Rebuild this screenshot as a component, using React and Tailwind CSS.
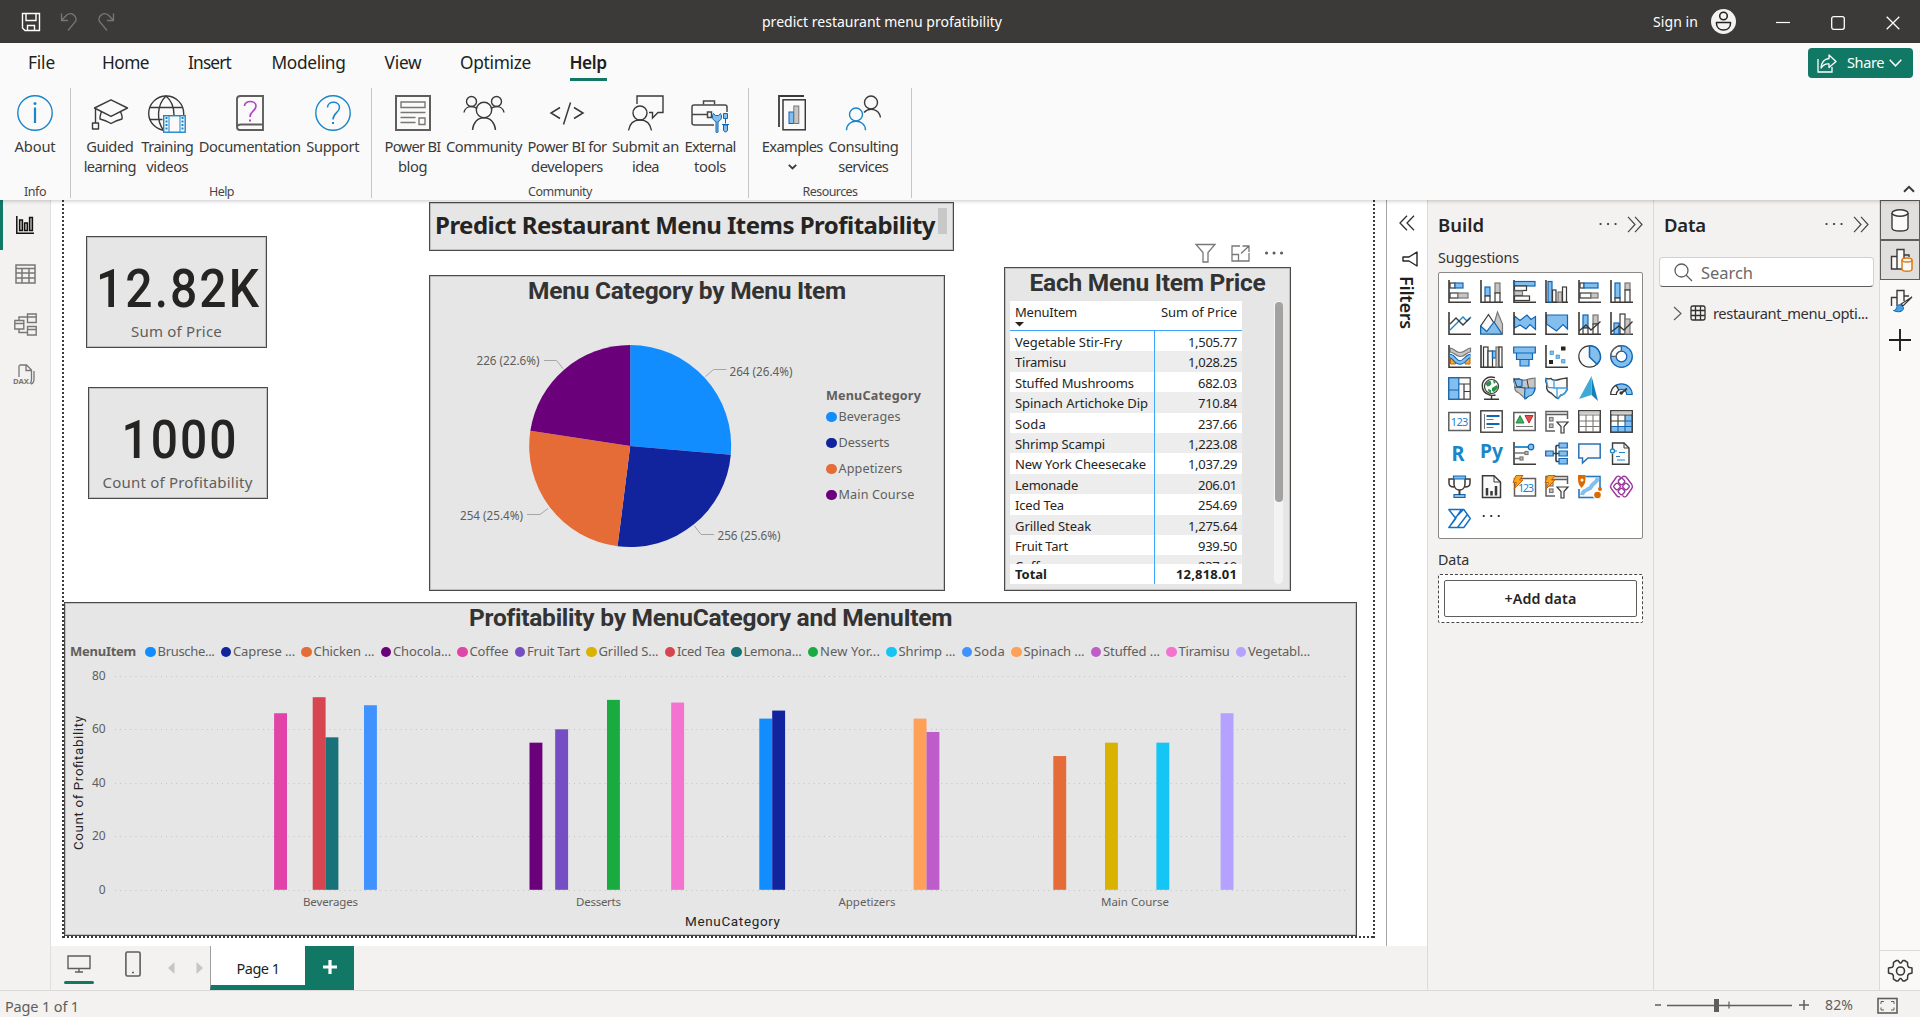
import { useLayoutEffect, useRef, useState } from "react";

/* Text whose tracking is adjusted so that it spans exactly `w` pixels. */
function T({ w, className = "", children }) {
  const ref = useRef(null);
  const [ls, setLs] = useState(0);
  useLayoutEffect(() => {
    const range = document.createRange();
    range.selectNodeContents(ref.current);
    const natural = range.getBoundingClientRect().width;
    setLs((w - natural) / String(children).length);
  }, []);
  return (
    <span ref={ref} className={"inline-block whitespace-pre text-left " + className} style={{ letterSpacing: ls, width: w }}>
      {children}
    </span>
  );
}

function Svg({ w, h, children, className = "", vb }) {
  return (
    <svg width={w} height={h} viewBox={vb || `0 0 ${w} ${h}`} fill="none" className={"block shrink-0 " + className}>
      {children}
    </svg>
  );
}

const D = "#3b3a39";
const B = "#1a86c9";
const BF = "#83beec";
const BS = "#0f66b5";
const GF = "#c8c6c4";
const GS = "#797775";

/* ---------- title bar ---------- */
function TitleBar() {
  return (
    <header className="grid h-[43px] shrink-0 grid-cols-[762px_240px_1fr] items-center bg-[#3b3a38] text-white">
      <div className="flex items-center gap-[19px] pl-[21px]">
        <Svg w={20} h={20}>
          <g stroke="#fff" strokeWidth="1.4">
            <path d="M1.5 1.5h17v17H4l-2.500-2.500z" />
            <path d="M5 1.500v7h10v-7M6.500 18.500v-5h7v5" />
          </g>
        </Svg>
        <Svg w={18} h={20} className="text-[#797775]">
          <path d="M1.500 1.500v7h6.500M1.800 8l5-5C11-.5 18 4 15.500 9.500L8 18.500" stroke="currentColor" strokeWidth="1.3" />
        </Svg>
        <Svg w={18} h={20} className="text-[#797775]">
          <path d="M16.500 1.500v7H10M16.200 8l-5-5C7-.5 0 4 2.500 9.500L10 18.500" stroke="currentColor" strokeWidth="1.3" />
        </Svg>
      </div>
      <T w={240} className="text-[14px]">predict restaurant menu profatibility</T>
      <div className="flex items-center justify-end pr-[20px]">
        <T w={45} className="text-[14px]">Sign in</T>
        <Svg w={25} h={25} className="ml-[13px]">
          <circle cx="12.500" cy="12.500" r="12.500" fill="#f3f2f1" />
          <circle cx="12.500" cy="7" r="3.800" stroke="#222" strokeWidth="1.500" />
          <path d="M5.500 13.500h14v1c0 4-3 6.500-7 6.500s-7-2.500-7-6.500z" stroke="#222" strokeWidth="1.500" strokeLinejoin="round" />
        </Svg>
        <Svg w={14} h={14} className="ml-[40px]"><path d="M0 7.500h14" stroke="#fff" strokeWidth="1.200" /></Svg>
        <Svg w={14} h={14} className="mt-[3px] ml-[41px]"><rect x=".7" y=".7" width="12.600" height="12.600" rx="2" stroke="#fff" strokeWidth="1.300" /></Svg>
        <Svg w={14} h={14} className="mt-[3px] ml-[41px]"><path d="M.7.7l12.600 12.600M13.300.7L.7 13.300" stroke="#fff" strokeWidth="1.300" /></Svg>
      </div>
    </header>
  );
}

/* ---------- ribbon ---------- */
const tabs = [
  ["File", 27, "w-[74px] pl-[28px]"],
  ["Home", 47, "w-[86px] pl-[28px]"],
  ["Insert", 43, "w-[83.500px] pl-[28px]"],
  ["Modeling", 74, "w-[113px] pl-[28px]"],
  ["View", 37, "w-[75.500px] pl-[28px]"],
  ["Optimize", 71, "w-[109.500px] pl-[28px]"],
];

const icons = {
  about: (
    <Svg w={36} h={36}>
      <circle cx="18" cy="18" r="17.200" stroke={B} strokeWidth="1.400" />
      <path d="M18 12.500V28" stroke={B} strokeWidth="2.200" />
      <circle cx="18" cy="8.500" r="1.500" fill={B} />
    </Svg>
  ),
  guided: (
    <Svg w={38} h={36}>
      <g stroke={D} strokeWidth="1.400" strokeLinejoin="round">
        <path d="M3.500 13L20 4.800 36.500 13 20 21.300z" />
        <path d="M10.500 16.500c-1 3-2 6-1.500 7.500 4 1 8 2.500 11 4.500 3-2 7-3.500 11-4.500.5-1.500-.5-5-1.500-7.500" />
        <path d="M4.500 13.500v14.500M1.500 28h6v6h-6z" />
      </g>
    </Svg>
  ),
  training: (
    <Svg w={38} h={38}>
      <g stroke={D} strokeWidth="1.400">
        <path d="M15.500 35.300C8 34 .7 27.500.7 18.500a17.500 17.500 0 0 1 35 0v2" />
        <path d="M15.500 35.300C8.500 26 8.500 10 18 1c6 5 8 12 8 19M2 12.500h32.500M2 24.500h12.500" />
      </g>
      <rect x="15.700" y="20.700" width="21.500" height="16.500" fill="#fafafa" stroke={B} strokeWidth="1.400" />
      <path d="M18.500 22v14M34.500 22v14" stroke={B} strokeWidth="2" strokeDasharray="2 1.500" />
      <path d="M21 21v16M32 21v16" stroke={B} />
    </Svg>
  ),
  doc: (
    <Svg w={28} h={36}>
      <path d="M27 1H4.500C2 1 1 2 1 4v28c0 2 1 3 3 3h23z M27 29.500H5c-2 0-4 .5-4 3" stroke="#605e5c" strokeWidth="1.900" />
      <path d="M8.500 11c0-6 11.500-6 11.500 0 0 5-6 5-6 11" stroke="#b146c2" strokeWidth="1.700" />
      <rect x="13" y="24.500" width="2" height="2" fill="#b146c2" />
    </Svg>
  ),
  support: (
    <Svg w={36} h={36}>
      <circle cx="18" cy="18" r="17.200" stroke={B} strokeWidth="1.400" />
      <path d="M12.500 12.500c0-7 12-7 12 0 0 5-6.500 5.500-6.500 12" stroke={B} strokeWidth="1.500" />
      <rect x="17" y="27" width="2" height="2" fill={B} />
    </Svg>
  ),
  blog: (
    <Svg w={36} h={36}>
      <rect x="1" y="1" width="34" height="34" stroke="#605e5c" strokeWidth="2" />
      <path d="M6 7h24v5.500H6zM24 23h6v6.500h-6z" stroke={GS} strokeWidth="1.400" />
      <path d="M5.500 17.500h25M5.500 22.500h15M5.500 27.500h15" stroke={GS} strokeWidth="1.400" />
    </Svg>
  ),
  community: (
    <Svg w={42} h={36}>
      <g stroke={D} strokeWidth="1.400">
        <circle cx="21" cy="15" r="7.700" />
        <path d="M9.500 35c.5-7 5-12.300 11.500-12.300S32 28 32.500 35" />
        <circle cx="8.500" cy="6.500" r="5" /><circle cx="33.500" cy="6.500" r="5" />
        <path d="M1 17.500c.5-3.500 3.500-6 7.500-6 2.500 0 4 1 5.500 2M41 17.500c-.5-3.500-3.500-6-7.500-6-2.500 0-4 1-5.500 2" />
      </g>
    </Svg>
  ),
  dev: (
    <Svg w={36} h={36}>
      <path d="M11 12.500L2 18l9 5.500M25 12.500l9 5.500-9 5.500M21.500 7.500l-7 22" stroke={D} strokeWidth="1.500" />
    </Svg>
  ),
  idea: (
    <Svg w={38} h={36}>
      <g stroke={D} strokeWidth="1.400">
        <path d="M10 9V1h26v16.500h-5L25.500 23v-5.500H22" />
        <circle cx="13" cy="18" r="7" />
        <path d="M1.500 35.500c1-6.500 5-10.500 11.500-10.500s10.500 4 11.500 10.500" />
      </g>
    </Svg>
  ),
  tools: (
    <Svg w={38} h={38}>
      <g stroke="#4a4846" strokeWidth="1.500">
        <path d="M23 30H3.500c-1.500 0-2.500-.5-2.500-2V12c0-1.500.5-2 2-2h31c1.500 0 2 .5 2 2v5" />
        <path d="M12.500 9.500V6h11v3.500M1 19.500h15M16.500 17h4v5.500h-4z" />
      </g>
      <g stroke={BS} fill={BF}>
        <path d="M25 37V26.500c-3.500-1-4.500-5-2.500-8l2 2h3l2-2c2 3 1 7-2.500 8V37c0 1-2 1-2 0z" />
        <path d="M32.500 18.500h4v5h-4zM34.500 23.500v5M31 29.500h7M32.500 30h4v5c0 2.500-4 2.500-4 0z" />
      </g>
    </Svg>
  ),
  examples: (
    <Svg w={28} h={36}>
      <path d="M1 32V1h25" stroke={D} strokeWidth="1.800" />
      <rect x="5" y="4.800" width="22.300" height="30" stroke={D} strokeWidth="1.500" />
      <rect x="11" y="17" width="4.500" height="11.500" fill={BF} stroke={BS} />
      <rect x="15.800" y="11" width="5" height="17.500" fill={GF} stroke={GS} />
    </Svg>
  ),
  consulting: (
    <Svg w={36} h={36}>
      <g stroke={D} strokeWidth="1.400"><circle cx="26" cy="7.500" r="6.500" /><path d="M19 17.500c5-5.500 15-4 16.500 5" /></g>
      <g stroke={B} strokeWidth="1.400"><circle cx="11" cy="19.500" r="6.500" /><path d="M1.500 35.300c0-12 19-12 19 0" /></g>
    </Svg>
  ),
};

const groups = [
  { name: "Info", nw: 22, cls: "w-[71px]", items: [["about", [["About", 41]]]] },
  {
    name: "Help", nw: 25, cls: "w-[301px] pl-px",
    items: [
      ["guided", [["Guided", 47], ["learning", 52]]],
      ["training", [["Training", 52], ["videos", 42]]],
      ["doc", [["Documentation", 102]]],
      ["support", [["Support", 53]]],
    ],
  },
  {
    name: "Community", nw: 64, cls: "w-[377px]",
    items: [
      ["blog", [["Power BI", 56], ["blog", 29]]],
      ["community", [["Community", 76]]],
      ["dev", [["Power BI for", 79], ["developers", 72]]],
      ["idea", [["Submit an", 67], ["idea", 27]]],
      ["tools", [["External", 51], ["tools", 32]]],
    ],
  },
  {
    name: "Resources", nw: 55, cls: "w-[163px]",
    items: [
      ["examples", [["Examples", 61], ["v", 0]]],
      ["consulting", [["Consulting", 70], ["services", 50]]],
    ],
  },
];

function Ribbon() {
  return (
    <div className="relative z-10 flex h-[157px] shrink-0 flex-col bg-[#fafafa] shadow-[0_1px_4px_rgba(0,0,0,0.22)]">
      <div className="flex h-[45px] shrink-0 justify-between">
        <nav className="flex pt-[5px] text-[17.300px] leading-[30px] text-[#201f1e]">
          {tabs.map(([t, w, c]) => (
            <div key={t} className={"box-border shrink-0 " + c}><T w={w}>{t}</T></div>
          ))}
          <div className="ml-[28px] h-[33px] w-[37px] border-b-[3px] border-[#117865] font-semibold"><T w={37}>Help</T></div>
        </nav>
        <button className="mt-[5px] mr-[7px] flex h-[30px] w-[105px] items-center rounded-[4px] bg-[#117865] pl-[9px] text-white">
          <Svg w={20} h={19}>
            <path d="M1 5v13h14v-5" stroke="#fff" strokeWidth="1.300" />
            <path d="M12 1l7 6.500-7 6V10c-3-.5-5.500.5-8 4C4.500 8.500 7.500 5 12 4.500z" stroke="#fff" strokeWidth="1.300" strokeLinejoin="round" />
          </Svg>
          <T w={37} className="ml-[10px] text-[14.500px]">Share</T>
          <Svg w={13} h={8} className="ml-[5px]"><path d="M.7.8l5.800 6 5.800-6" stroke="#fff" strokeWidth="1.500" /></Svg>
        </button>
      </div>
      <div className="flex flex-1">
        {groups.map((g) => (
          <section key={g.name} className={"flex h-[110px] shrink-0 flex-col items-center justify-between border-r border-[#c8c6c4] " + g.cls}>
            <div className="flex justify-center gap-[5.500px] pt-[7px]">
              {g.items.map(([ic, lines]) => (
                <div key={ic} className="flex flex-col items-center text-[14.700px] leading-[20px] text-[#3b3a39]">
                  <div className="flex h-[35px] items-start justify-center">{icons[ic]}</div>
                  <div className="mt-[6px] flex flex-col items-center">
                    {lines.map(([t, w]) =>
                      w ? <T key={t} w={w}>{t}</T> : (
                        <Svg key={t} w={9} h={6} className="mt-[8px]"><path d="M.8.8l3.700 3.700L8.200.8" stroke={D} strokeWidth="1.800" /></Svg>
                      ),
                    )}
                  </div>
                </div>
              ))}
            </div>
            <T w={g.nw} className="-mb-[2px] text-[12.500px] leading-[16px] text-[#484644]">{g.name}</T>
          </section>
        ))}
        <Svg w={12} h={8} className="mt-auto mr-[5px] mb-[7px] ml-auto"><path d="M1 6.800l5-5 5 5" stroke={D} strokeWidth="2" /></Svg>
      </div>
    </div>
  );
}

/* ---------- left rail ---------- */
function LeftRail() {
  return (
    <aside className="flex w-[51px] shrink-0 flex-col border-r border-[#e1dfdd] bg-[#f3f2f1] text-[#797775]">
      <div className="flex h-[50px] items-center border-l-[3px] border-[#117865] pl-[13px]">
        <Svg w={18} h={18}>
          <path d="M.8 0v17.200H18" stroke="#111" strokeWidth="1.500" />
          <path d="M3.500 4h3v10.500h-3zM8.500 7h3v7.500h-3zM13.500 1.500h3v13h-3z" stroke="#111" strokeWidth="1.300" fill="#a19f9d" />
        </Svg>
      </div>
      <Svg w={21} h={20} className="mt-[14px] ml-[15px]">
        <path d="M1 1h19v18H1zM1 4.500h19M1 9h19M1 14h19M7 4.500V19M14 4.500V19" stroke="currentColor" strokeWidth="1.500" />
      </Svg>
      <Svg w={23} h={23} className="mt-[29px] ml-[14px]">
        <path d="M13.500 1h8.700v8.500h-8.700zM13.500 4h8.700M.8 7.500h9v8.500h-9zM.8 10.500h9M13.500 13.500h8.700V22h-8.700zM13.500 16.500h8.700M5 7.500V4h8.500M5 16v3.500h8.500" stroke="currentColor" strokeWidth="1.400" />
      </Svg>
      <div className="mt-[28px] ml-[13px] h-[21px] w-[22px]">
        <svg width="22" height="21" fill="none">
          <path d="M6 13V2.500C6 1.500 6.500 1 7.500 1h6l5 5v9c0 3-.5 4-2 4.500M13 1v5.500h5.500M21 7v8c0 3-1 4.500-3 5" stroke="currentColor" strokeWidth="1.300" />
          <text x="0" y="20.300" textLength="16" lengthAdjust="spacingAndGlyphs" fontSize="7.500" fontWeight="700" fill="currentColor">DAX</text>
        </svg>
      </div>
    </aside>
  );
}

/* ---------- report canvas ---------- */
const pieSlices = [
  [0.264, "#118dff"],
  [0.256, "#12239e"],
  [0.254, "#e66c37"],
  [0.226, "#6b007b"],
];

function Pie() {
  let a = 0;
  const cx = 200.2, cy = 170, r = 101;
  const pt = (t) => `${cx + r * Math.sin(t * 2 * Math.PI)} ${cy - r * Math.cos(t * 2 * Math.PI)}`;
  const labels = [
    ["226 (22.6%)", 47, 89, "M114 84.500h12.600l6.500 8.200"],
    ["264 (26.4%)", 300, 99.500, "M296.500 93.500h-13l-8 7"],
    ["256 (25.6%)", 288, 264, "M284 258.500h-13l-6.500-8.500"],
    ["254 (25.4%)", 30.500, 244, "M97 238.500h13l8-6"],
  ];
  return (
    <svg width="400" height="310" className="absolute top-0 left-0">
      {pieSlices.map(([f, c]) => {
        const d = `M${cx} ${cy}L${pt(a)}A${r} ${r} 0 0 1 ${pt(a + f)}Z`;
        a += f;
        return <path key={c} d={d} fill={c} />;
      })}
      {labels.map(([t, x, y, l]) => (
        <g key={t}>
          <path d={l} fill="none" stroke="#a6a6a6" />
          <text x={x - 0.5} y={y} textLength="63" fontSize="11.700" fill="#605e5c">{t}</text>
        </g>
      ))}
    </svg>
  );
}

const rows = [
  ["Vegetable Stir-Fry", 107, "1,505.77", 49],
  ["Tiramisu", 51, "1,028.25", 49],
  ["Stuffed Mushrooms", 119, "682.03", 39],
  ["Spinach Artichoke Dip", 133, "710.84", 39],
  ["Soda", 31, "237.66", 39],
  ["Shrimp Scampi", 90, "1,223.08", 49],
  ["New York Cheesecake", 131, "1,037.29", 49],
  ["Lemonade", 63, "206.01", 39],
  ["Iced Tea", 49, "254.69", 39],
  ["Grilled Steak", 76, "1,275.64", 49],
  ["Fruit Tart", 53, "939.50", 39],
  ["Coffee", 39, "237.10", 39],
];

function PriceTable() {
  return (
    <div className="flex pt-[2px]">
      <div className="ml-[5px] w-[232px] text-[13px] text-[#252423]">
        <div className="flex h-[30px] justify-between border-b border-[#41a4ff] bg-white px-[5px]">
          <div className="leading-[22px]">
            <T w={62}>MenuItem</T>
            <Svg w={9} h={5} className="-mt-[1px]"><path d="M0 0h9L4.500 4.500z" fill="#252423" /></Svg>
          </div>
          <T w={76} className="leading-[22px]">Sum of Price</T>
        </div>
        <div className="h-[233px] overflow-hidden bg-white">
          {rows.map(([n, nw, v, vw], i) => (
            <div key={n} className={"flex h-[20.400px] leading-[22.500px] " + (i % 2 ? "bg-[#ededed]" : "bg-white")}>
              <div className="w-[145px] border-r border-[#41a4ff] pl-[5px]"><T w={nw}>{n}</T></div>
              <div className="w-[87px] pr-[5px] text-right"><T w={vw}>{v}</T></div>
            </div>
          ))}
        </div>
        <div className="flex h-[20px] bg-white font-bold leading-[20px] text-[#201f1e]">
          <div className="w-[145px] border-r border-[#41a4ff] pl-[5px]"><T w={32}>Total</T></div>
          <div className="w-[87px] pr-[5px] text-right"><T w={61}>12,818.01</T></div>
        </div>
      </div>
      <div className="ml-[32px] h-[283px] w-[9px] rounded-full bg-[#f3f3f3]">
        <div className="mt-[1px] ml-[.5px] h-[200px] w-[8px] rounded-full bg-[#a4a2a1]" />
      </div>
    </div>
  );
}

const legend = [
  ["Brusche...", 57, "bg-[#118dff]"],
  ["Caprese ...", 62, "bg-[#12239e]"],
  ["Chicken ...", 61, "bg-[#e66c37]"],
  ["Chocola...", 58, "bg-[#6b007b]"],
  ["Coffee", 39, "bg-[#e044a7]"],
  ["Fruit Tart", 53, "bg-[#744ec2]"],
  ["Grilled S...", 60, "bg-[#d9b300]"],
  ["Iced Tea", 48, "bg-[#d64550]"],
  ["Lemona...", 58, "bg-[#197278]"],
  ["New Yor...", 60, "bg-[#1aab40]"],
  ["Shrimp ...", 57, "bg-[#15c6f4]"],
  ["Soda", 31, "bg-[#4092ff]"],
  ["Spinach ...", 61, "bg-[#ffa058]"],
  ["Stuffed ...", 57, "bg-[#be5dc9]"],
  ["Tiramisu", 51, "bg-[#f472d0]"],
  ["Vegetabl...", 62, "bg-[#b5a1ff]"],
];

const bars = [
  [274.1, 66, "#e044a7"], [312.7, 72, "#d64550"], [325.5, 57, "#197278"], [364, 69, "#4092ff"],
  [529.5, 55, "#6b007b"], [555.2, 60, "#744ec2"], [607, 71, "#1aab40"], [671.2, 70, "#f472d0"],
  [759.3, 64, "#118dff"], [772.2, 67, "#12239e"], [913.6, 64, "#ffa058"], [926.5, 59, "#be5dc9"],
  [1053.300, 50, "#e66c37"], [1105, 55, "#d9b300"], [1156.400, 55, "#15c6f4"], [1220.600, 66, "#b5a1ff"],
];

function BarChart() {
  return (
    <svg width="1291" height="270" viewBox="65 664 1291 270" className="block" fill="#605e5c" fontSize="11.500">
      {[80, 60, 40, 20, 0].map((v) => (
        <g key={v}>
          <path d={`M115 ${Math.round(889.5 - v * 2.675) + 0.5}H1349`} stroke="#c4c2c0" strokeDasharray="1 4.100" />
          <text x="105.500" y={893.5 - v * 2.675} textAnchor="end" fontSize="12" textLength={v ? 13.5 : 6.800}>{v}</text>
        </g>
      ))}
      {bars.map(([x, v, c]) => (
        <rect key={x} x={x} y={889.800 - v * 2.675} width="12.900" height={v * 2.675} fill={c} />
      ))}
      <text x="303" y="905.500" textLength="55">Beverages</text>
      <text x="576" y="905.500" textLength="45">Desserts</text>
      <text x="838.500" y="905.500" textLength="57">Appetizers</text>
      <text x="1101" y="905.500" textLength="68">Main Course</text>
      <text x="685" y="925.500" textLength="95" fill="#252423" fontFamily="Roboto" fontSize="13.500">MenuCategory</text>
      <text transform="translate(82.500 850) rotate(-90)" textLength="134" fill="#252423" fontFamily="Roboto" fontSize="13.300">Count of Profitability</text>
    </svg>
  );
}

/* Condensed, widely tracked figures of a KPI card. */
function Figure({ x, w, children }) {
  return (
    <svg width="179" height="82" className="block shrink-0">
      <text transform={`translate(${x} 70) scale(0.88 1)`} textLength={w / 0.88} fill="#252423" fontFamily="Roboto" fontWeight="500" fontSize="54.500">
        {children}
      </text>
    </svg>
  );
}

const card = "absolute border border-[#4a4948] bg-[#e6e6e6] shadow-[inset_0_0_0_1px_rgba(96,94,92,0.28)] ";

function Canvas() {
  return (
    <div className="relative h-[746px] w-[1335px] shrink-0 overflow-hidden bg-white">
      <svg width="1335" height="746" className="absolute inset-0" stroke="#3b3a39" strokeWidth="2" strokeDasharray="2 2">
        <path d="M12 0V738M1323 0V738M12 737H1324" />
      </svg>

      <div className={card + "top-[36px] left-[35px] flex h-[112px] w-[181px] flex-col items-center"}>
        <Figure x={9} w={163}>12.82K</Figure>
        <T w={91} className="mt-[1px] text-[15px] leading-[22px] text-[#605e5c]">Sum of Price</T>
      </div>
      <div className={card + "top-[187px] left-[37px] flex h-[112px] w-[180px] flex-col items-center"}>
        <Figure x={32.5} w={115}>1000</Figure>
        <T w={150} className="mt-[1px] -ml-[1px] text-[15px] leading-[22px] text-[#605e5c]">Count of Profitability</T>
      </div>

      <div className={card + "top-[2px] left-[378px] flex h-[49px] w-[525px] pl-[5px]"}>
        <T w={500} className="mt-[5px] text-[24px] leading-[34px] font-bold text-[#252423]">Predict Restaurant Menu Items Profitability</T>
        <div className="mt-[5px] ml-[3px] h-[26px] w-[9px] bg-[#c8c8c8]" />
      </div>

      <div className={card + "top-[75px] left-[378px] flex h-[316px] w-[516px] flex-col"}>
        <T w={318} className="mx-auto -mt-px font-['Roboto'] text-[24.500px] leading-[31px] font-bold text-[#333]">Menu Category by Menu Item</T>
        <Pie />
        <div className="mt-[80px] ml-[396px] text-[12.600px] leading-[20px] text-[#605e5c]">
          <T w={95} className="font-bold">MenuCategory</T>
          {[["Beverages", 62, "bg-[#118dff]"], ["Desserts", 51, "bg-[#12239e]"], ["Appetizers", 64, "bg-[#e66c37]"], ["Main Course", 76, "bg-[#6b007b]"]].map(([t, w, c], i) => (
            <div key={t} className={"flex h-[20px] items-center gap-[2px] " + (i ? "mt-[6px]" : "mt-px")}>
              <span className={"size-[10.500px] rounded-full " + c} />
              <T w={w}>{t}</T>
            </div>
          ))}
        </div>
      </div>

      <div className="absolute top-[43px] left-[1144px] flex items-center gap-[15px] text-[#797775]">
        <Svg w={21} h={20}><path d="M1 1.500h19l-7 8V19H8V9.500z" stroke="currentColor" strokeWidth="1.300" /></Svg>
        <Svg w={19} h={17} className="mt-px">
          <path d="M9 1H1v15h17V8M1 9.500h6.500V16M11.500 1H18v6M18 1l-8 7.500" stroke="currentColor" strokeWidth="1.300" />
        </Svg>
        <Svg w={20} h={6} className="-ml-px"><path d="M2.500 3h.1M10 3h.1M17.500 3h.1" stroke="#605e5c" strokeWidth="3" strokeLinecap="round" /></Svg>
      </div>
      <div className={card + "top-[67px] left-[953px] flex h-[324px] w-[287px] flex-col"}>
        <T w={236} className="mx-auto -mt-px mb-px font-['Roboto'] text-[24.500px] leading-[31px] font-bold text-[#333]">Each Menu Item Price</T>
        <PriceTable />
      </div>

      <div className={card + "top-[402px] left-[13px] flex h-[334px] w-[1293px] flex-col"}>
        <T w={483} className="mx-auto -mt-px font-['Roboto'] text-[24.500px] leading-[31px] font-bold text-[#333]">Profitability by MenuCategory and MenuItem</T>
        <div className="mt-[8px] mb-px flex h-[22px] items-center pl-[5px] text-[13px] text-[#605e5c]">
          <T w={66} className="mr-[9px] font-bold">MenuItem</T>
          {legend.map(([t, w, c]) => (
            <div key={t} className="mr-[6px] flex items-center gap-[2px]">
              <span className={"size-[10.500px] rounded-full " + c} />
              <T w={w}>{t}</T>
            </div>
          ))}
        </div>
        <BarChart />
      </div>
    </div>
  );
}

function PageTabs() {
  return (
    <div className="flex h-[44px] w-full shrink-0 bg-[#f3f2f1]">
      <div className="ml-[13px] flex w-[30px] flex-col items-center justify-between pt-[9px] pb-[6px]">
        <Svg w={24} h={18}><path d="M1 1h22v12.500H1zM12 13.500V17M8 17h8" stroke="#605e5c" strokeWidth="1.400" /></Svg>
        <div className="h-[3px] w-[30px] rounded-full bg-[#117865]" />
      </div>
      <Svg w={16} h={26} className="mt-[5px] ml-[31px]"><rect x=".9" y="1" width="14.200" height="24" rx="1.500" stroke="#605e5c" strokeWidth="1.600" /><path d="M7 21.500h2" stroke="#605e5c" strokeWidth="1.500" /></Svg>
      <Svg w={7} h={12} className="mt-[16px] ml-[27px]"><path d="M6.500 0v12L0 6z" fill="#c8c6c4" /></Svg>
      <Svg w={7} h={12} className="mt-[16px] ml-[21px]"><path d="M.5 0v12L7 6z" fill="#c8c6c4" /></Svg>
      <div className="ml-[7px] flex h-[44px] w-[95px] items-center justify-center border-b-[5px] border-l border-b-[#117865] border-l-[#a19f9d] bg-white pt-[7px] text-[14.500px] text-[#201f1e]"><T w={43}>Page 1</T></div>
      <div className="flex w-[49px] items-center justify-center bg-[#117865] pb-[3px]">
        <Svg w={14} h={14}><path d="M7 0v14M0 7h14" stroke="#fff" strokeWidth="3.200" /></Svg>
      </div>
    </div>
  );
}

/* ---------- build pane ---------- */
const axes = <path d="M1 0V22.200H23" stroke={D} strokeWidth="1.600" />;
const bl = { fill: BF, stroke: BS, strokeWidth: 1.200 };
const gr = { fill: GF, stroke: GS, strokeWidth: 1.200 };
const wh = { fill: "#fafafa", stroke: D, strokeWidth: 1.200 };
const bolt = <path d="M3 .5h7L6.500 5h3.500L1 14l2.500-6.500H0z" fill="#f7a823" stroke="#d06000" />;
const slicer = (
  <g>
    <path d="M10 21H1V1.500h21.500V9M1 4.500h21.500" stroke="#605e5c" strokeWidth="1.500" />
    <path d="M1.500 3h20.500" stroke={GF} strokeWidth="1.500" />
    <rect x="4.500" y="7.500" width="3.500" height="3.500" {...gr} /><rect x="4.500" y="14" width="3.500" height="3.500" {...gr} />
    <path d="M12 12h11l-4 4.500v6.500h-3v-6.500z" fill="#fafafa" stroke={D} strokeWidth="1.200" />
  </g>
);
const map1 = "M1 1.500c3 1 4 0 5 0 1 2 5 2 8 1 3-1 5-1 8-1.500v12c-2 3-3 5-6 5l-3 3.500c-4-1-5-5-8-6-3-1-4-5-3-8-1-2-2-3-1-6z";
const visuals = [
  <>{axes}<rect x="2" y="3" width="5" height="5" {...wh} /><rect x="7" y="3" width="8" height="5" {...bl} /><rect x="2" y="13" width="8" height="5" {...wh} /><rect x="10" y="13" width="10" height="5" {...gr} /></>,
  <>{axes}<rect x="5" y="7" width="5" height="9" {...bl} /><rect x="5" y="16" width="5" height="6" {...wh} /><rect x="15" y="3" width="5" height="10" {...gr} /><rect x="15" y="13" width="5" height="9" {...wh} /></>,
  <>{axes}<rect x="1.500" y="1.500" width="20.500" height="4.500" {...bl} /><rect x="1.500" y="6" width="12" height="4.500" {...wh} /><rect x="1.500" y="11" width="8" height="4.500" {...gr} /><rect x="1.500" y="16" width="15" height="4.500" {...wh} /></>,
  <>{axes}<rect x="3" y="1.500" width="4" height="20.500" {...bl} /><rect x="7.500" y="10" width="3.500" height="12" {...wh} /><rect x="13" y="12" width="4" height="10" {...gr} /><rect x="17.500" y="7" width="4" height="15" {...wh} /></>,
  <>{axes}<rect x="2" y="3" width="4" height="5" {...wh} /><rect x="6" y="3" width="14" height="5" {...bl} /><rect x="2" y="13" width="11" height="5" {...wh} /><rect x="13" y="13" width="7" height="5" {...gr} /></>,
  <>{axes}<rect x="5" y="3" width="5" height="15" {...bl} /><rect x="5" y="18" width="5" height="4" {...wh} /><rect x="15" y="3" width="5" height="7" {...gr} /><rect x="15" y="10" width="5" height="12" {...wh} /></>,
  <>{axes}<path d="M2 18L15 5l4 4 4-4" stroke={B} strokeWidth="1.400" /><path d="M2 12l6-6 7 7 7-7" stroke={D} strokeWidth="1.400" /></>,
  <><path d="M11 22L17.500 0 22.500 12v10z" {...gr} /><path d="M.7 22V14L8.500 2.500 21 22z" {...wh} /><path d="M.7 22V14l6 5.500L14 10l8 12z" {...bl} /></>,
  <><path d="M1.500 4L7 8.500l7-5.500 4 4.500 4.500-3v13L17 12.500 13 17l-6-4-5.500 3z" {...bl} />{axes}</>,
  <><path d="M1.500 3h21v14L18 12.500 11.500 19 1.500 12z" {...bl} />{axes}</>,
  <>{axes}<rect x="5" y="3" width="5" height="13" {...bl} /><rect x="5" y="16" width="5" height="6" {...wh} /><rect x="15" y="3" width="5" height="9" {...gr} /><rect x="15" y="12" width="5" height="10" {...wh} /><path d="M1 19l7-6 5 5 9.500-8.500" stroke={D} strokeWidth="1.400" /></>,
  <>{axes}<rect x="4" y="11" width="5" height="11" {...bl} /><rect x="10" y="2" width="5" height="20" {...wh} /><rect x="15" y="7" width="5" height="15" {...gr} /><path d="M1 20l8-6 5 4 8.500-8.500" stroke={D} strokeWidth="1.400" /></>,
  <><path d="M2.500 13h5v6h-5zM17 13h5v6h-5z" fill="#f7a823" stroke="#d06000" /><path d="M2 3c4 0 5 4.500 10 4.500S19 3 22.500 3v4c-4 0-5 4.500-10 4.500S6 7 2 7z" {...gr} /><path d="M2 11c4 0 5 6.500 10 6.500 5 0 6-6.500 10.500-6.500" stroke={BS} strokeWidth="4.500" /><path d="M2 11c4 0 5 6.500 10 6.500 5 0 6-6.500 10.500-6.500" stroke={BF} strokeWidth="2.300" />{axes}</>,
  <>{axes}<rect x="3.500" y="2" width="4.500" height="20" {...wh} /><rect x="8" y="6" width="4.500" height="16" {...wh} /><rect x="12.500" y="6" width="3.500" height="7" {...bl} /><rect x="16" y="2" width="3" height="20" {...gr} /><rect x="19" y="2" width="3" height="20" {...wh} /></>,
  <><path d="M.7 2h21.600v6H.7zM3.500 8h16v6.500h-16zM7 14.500h9V21H7z" {...bl} /></>,
  <>{axes}<path d="M16 1.500h4.500v4H16zM4 15h4v4H4z" fill="#252423" /><path d="M5 6h3.500v3.500H5zM11 10h3.500v3.500H11zM16.500 14.500H20V18h-3.500z" fill={BF} stroke={B} strokeWidth=".6" /></>,
  <><circle cx="11.500" cy="11.500" r="10.700" {...wh} /><path d="M11.500.8a10.700 10.700 0 0 1 7.500 18.500L11.500 12z" {...bl} strokeWidth="1.500" /></>,
  <><circle cx="11.500" cy="11.500" r="8.200" stroke={BF} strokeWidth="5.500" /><path d="M3.200 10.500A8.200 8.200 0 0 1 10.500 3.300" stroke="#fafafa" strokeWidth="5" /><circle cx="11.500" cy="11.500" r="10.800" stroke={BS} strokeWidth="1.300" /><circle cx="11.500" cy="11.500" r="5.300" stroke={BS} strokeWidth="1.300" /><path d="M.7 11.500A10.800 10.800 0 0 1 11.500.7v5.500a5.300 5.300 0 0 0-5.300 5.300z" stroke="#605e5c" strokeWidth="1.200" /></>,
  <><rect x=".8" y=".8" width="21.400" height="21.400" {...wh} /><rect x=".8" y=".8" width="10" height="21.400" {...bl} /><path d="M.8 13h10" stroke={BS} /><path d="M11 7h11M16 7v15M16 14.500h6" stroke={D} strokeWidth="1.200" /></>,
  <><circle cx="11.500" cy="9.500" r="7" stroke={D} strokeWidth="1.200" fill="#fff" /><path d="M5.500 7c2-3 3-3 5-3l1 3-2 2-2 .5zM12 11l5-3 1 3-4 4-2-1zM8 12l3 1v3c-2 0-3-2-3-4zM13 3l3 2-2 2z" fill="#2b9348" /><path d="M15 .7C7-2 1 4 2.500 11c1 5 7 8.500 13 7M11.500 18v4M4 22.300h15" stroke={D} strokeWidth="1.400" /></>,
  <><path d={map1} {...gr} /><path d="M1 2c3 1 4 0 5 0l3 1v6l-7 1.500M12 11h10c-1 6-3 8-6 8l-4 3c-1-4 0-7 0-11z" {...bl} /><path d="M1 1.500l3 8.500 8 1M14 2.500l1.500 8.500" stroke={D} /></>,
  <><path d={map1} fill="#fafafa" stroke={D} strokeWidth="1.400" /><path d="M1 1.500l2 9 9 .5v9M9 3v8h13c-1 5-3 7-6 7l-3 4" stroke="#3aa0e8" strokeWidth="1.300" /></>,
  <><path d="M13.500-1L20 24l-6.500-6z" fill="#1480b8" /><path d="M13.500-1v19L1 22z" fill="#3fa9d8" /></>,
  <><path d="M.8 17.500a10.700 10.700 0 0 1 21.400 0h-5.500a5.200 5.200 0 0 0-10.400 0z" {...bl} /><path d="M.8 17.500A10.700 10.700 0 0 1 6 8.200l2.700 4.700a5.200 5.200 0 0 0-2.400 4.600z" {...wh} /><path d="M11 16.500l6-5" stroke={D} strokeWidth="1.800" /><circle cx="11.200" cy="16" r="1.800" fill={D} /></>,
  <><rect x=".8" y="2.500" width="21.400" height="18" stroke="#605e5c" strokeWidth="1.500" fill="#fff" /><text x="2.800" y="16" fontSize="11" fill={B} textLength="17.500">123</text></>,
  <><rect x=".8" y=".8" width="21.400" height="21.400" stroke={D} strokeWidth="1.400" fill="#fff" /><path d="M4.500 4v15" stroke={GS} /><path d="M6.500 6h13M6.500 14h13" stroke={BS} strokeWidth="2" /><path d="M6.500 9.500h7M6.500 17.500h7" stroke={GS} /></>,
  <><rect x=".8" y="2.500" width="21.400" height="18" stroke="#605e5c" strokeWidth="1.500" fill="#fff" /><path d="M3 13l4-7.500L11 13z" fill="#3fae5a" stroke="#1f8a3c" /><path d="M12 5.500h8L16 13z" fill="#e05050" stroke="#c02828" /><path d="M3 16.500h17" stroke={GS} /></>,
  slicer,
  <><rect x=".8" y=".8" width="21.400" height="21.400" stroke={D} strokeWidth="1.500" fill="#fff" /><path d="M1.500 2.500h20" stroke={GF} strokeWidth="2.500" /><path d="M1 5h21M1 11h21M1 16.500h21M8 5v17M15 5v17" stroke={GS} strokeWidth="1.100" /></>,
  <><path d="M15 5h7.500v17.500H1V16h14z" fill={BF} /><rect x=".8" y=".8" width="21.400" height="21.400" stroke={D} strokeWidth="1.500" /><path d="M1.500 2.500h20" stroke={GF} strokeWidth="2.500" /><path d="M1 5h21M1 11h14M8 5v11M15 5v6" stroke={D} strokeWidth="1.100" /><path d="M1 16.500h21M15 11h7M15 11v11M8 16v6" stroke={BS} strokeWidth="1.100" /></>,
  <text x="3.500" y="19" fontSize="21.500" fontWeight="700" fill={B} textLength="13" lengthAdjust="spacingAndGlyphs">R</text>,
  <text x="0" y="15.500" fontSize="20" fontWeight="700" fill={B} textLength="23" lengthAdjust="spacingAndGlyphs">Py</text>,
  <>{axes}<path d="M2 5h13" stroke={B} strokeWidth="1.800" /><circle cx="18" cy="5" r="2.800" {...bl} /><path d="M2 11h10M2 16.500h5" stroke={GS} strokeWidth="1.500" /><rect x="12" y="9.500" width="3" height="3" {...gr} /><rect x="7" y="15" width="3" height="3" {...gr} /></>,
  <><path d="M7 11.500h8M11 3.500v16M11 3.500h4M11 19.500h4" stroke={D} strokeWidth="1.600" /><path d="M.7 9h7.500v5H.7zM14 1h8.300v5H14zM14 9h8.300v5H14zM14 16.500h8.300v5.500H14z" {...bl} /></>,
  <path d="M.8 2h21.400v14H10l-5.500 5V16H.8z" stroke="#2a72b5" strokeWidth="1.500" fill="#fafafa" />,
  <><path d="M2.500 7V1H14l5 5v16.200H2.500V12" stroke={D} strokeWidth="1.400" fill="#fafafa" /><path d="M14 1v5h5" stroke={D} /><circle cx="2.500" cy="9" r="2" stroke={B} strokeWidth="1.300" /><path d="M5 9h2M9 10.500h6M6 14.500h4M7 18h8" stroke={B} /></>,
  <><path d="M6 2h11v7c0 8-11 8-11 0zM6 4H1v4c0 3 2 4 5 4M17 4h5v4c0 3-2 4-5 4" stroke={D} strokeWidth="1.500" /><path d="M5.500 1h12v3h-12zM6 19.500h11v3H6z" {...bl} /><path d="M11.500 15v5" stroke={D} strokeWidth="2" /></>,
  <><path d="M2.500 .8H14L20.500 7v15.500h-18z" stroke={D} strokeWidth="1.500" fill="#fafafa" /><path d="M14 1v6h6" stroke={D} /><path d="M7 20.500V13M11.500 20.500V16M16 20.500V11" stroke={D} strokeWidth="2.500" /></>,
  <><rect x="1.500" y="3.500" width="21" height="17.500" stroke="#605e5c" strokeWidth="1.500" fill="#fff" /><text x="5" y="17" fontSize="11" fill={B} textLength="16">123</text>{bolt}</>,
  <>{slicer}{bolt}</>,
  <><rect x="1" y="1.500" width="21" height="21" fill="#fafafa" stroke="#2a78b8" strokeWidth="1.600" /><path d="M4 20c1-6 8-5 9-8 2-5 5-3 7-9" stroke={BF} strokeWidth="4" /><path d="M-.5-1h8v15h-8z" fill="#fff" /><path d="M3.500 13C0 9 0 7 0 0h7.500c0 7 0 9-4 13z" fill="#dd6a00" /><circle cx="4" cy="5" r="1.500" fill="#fff" /><circle cx="19.500" cy="19.500" r="5" fill="#fff" /><circle cx="19.500" cy="20" r="3.300" fill="#dd6a00" /><circle cx="22" cy="14" r="2" fill="#dd6a00" /></>,
  <g stroke="#9a3a9e" strokeWidth="1.400" strokeLinejoin="round"><path d="M10.500 2.500L9.500 1.500Q8 .5 6.500 2L1.200 9.500Q0 11.500 1.200 13.500L6.500 20.500Q8 22.500 10 21.500M12.500 20.500l1 1q1.500 1 3-.5l5.300-7.500q1.200-2 0-4L16.500 2.500Q15 .5 13 1.500L8 5.500" /><rect x="-2.700" y="-2.700" width="5.400" height="5.400" rx="1.300" transform="translate(11.500 6.500) rotate(45)" /><rect x="-2.700" y="-2.700" width="5.400" height="5.400" rx="1.300" transform="translate(16 11.500) rotate(45)" /><rect x="-2.700" y="-2.700" width="5.400" height="5.400" rx="1.300" transform="translate(11.500 16.500) rotate(45)" /><rect x="-2.700" y="-2.700" width="5.400" height="5.400" rx="1.300" transform="translate(7 11.500) rotate(45)" /></g>,
  <path d="M.8 2.500h15l6.500 9-6.500 9H.8l7-9zM13.500 2.500L2 19M19 8L9.500 20.500M7 11l8-8" stroke="#1070c8" strokeWidth="1.400" strokeLinejoin="round" />,
  <path d="M3.700 9h.1M11.200 9h.1M18.700 9h.1" stroke="#252423" strokeWidth="2.200" strokeLinecap="round" />,
];

function PaneHeader({ title, w }) {
  return (
    <div className="flex h-[48px] shrink-0 items-center">
      <T w={w} className="mt-[2px] text-[18.500px] font-semibold text-[#252423]">{title}</T>
      <Svg w={20} h={4} className="ml-auto"><path d="M2.500 2h.1M10 2h.1M17.500 2h.1" stroke="#3b3a39" strokeWidth="2.200" strokeLinecap="round" /></Svg>
      <Svg w={16} h={17} className="ml-[9px]"><path d="M1 .8l7 7.700-7 7.700M8 .8l7 7.700-7 7.700" stroke="#484644" strokeWidth="1.200" /></Svg>
    </div>
  );
}

function BuildPane() {
  return (
    <section className="flex w-[226px] shrink-0 flex-col border-r border-[#dcdad8] bg-[#f3f2f1] pr-[10px] pl-[10px]">
      <PaneHeader title="Build" w={46} />
      <T w={81} className="-mt-px text-[14.300px] leading-[22px] text-[#323130]">Suggestions</T>
      <div className="mt-[3px] grid h-[267px] w-[205px] shrink-0 auto-rows-[32.450px] grid-cols-[repeat(6,32.400px)] rounded-[2px] border border-[#8a8886] bg-white pt-[7px] pl-[9px]">
        {visuals.map((v, i) => <Svg key={i} w={23} h={23} className="overflow-visible">{v}</Svg>)}
      </div>
      <T w={31} className="mt-[10px] text-[14.300px] leading-[22px] text-[#323130]">Data</T>
      <div className="mt-[3px] h-[49px] w-[205px] rounded-[2px] border border-dashed border-[#484644] bg-white p-[5px]">
        <button className="flex h-[37px] w-[193px] items-center justify-center rounded-[2px] border border-[#605e5c] text-[14.300px] font-semibold text-[#252423]"><T w={72}>+Add data</T></button>
      </div>
    </section>
  );
}

function DataPane() {
  return (
    <section className="flex w-[226px] shrink-0 flex-col border-r border-[#dcdad8] bg-[#f3f2f1] px-[5px]">
      <div className="pr-[5px] pl-[5px]"><PaneHeader title="Data" w={42} /></div>
      <div className="mt-[9px] flex h-[30px] w-[215px] shrink-0 items-center rounded-[4px] border border-[#d1d1d1] border-b-[#605e5c] bg-white pl-[14px]">
        <Svg w={19} h={19}><circle cx="7.500" cy="7.500" r="6.500" stroke="#605e5c" strokeWidth="1.300" /><path d="M12 12l6 6" stroke="#605e5c" strokeWidth="1.300" /></Svg>
        <T w={52} className="mt-[3px] ml-[8px] text-[16.500px] text-[#6b6967]">Search</T>
      </div>
      <div className="mt-[14px] flex h-[24px] items-center pl-[14px]">
        <Svg w={9} h={15}><path d="M1 1l7 6.500L1 14" stroke="#605e5c" strokeWidth="1.200" /></Svg>
        <Svg w={16} h={16} className="ml-[8px]"><path d="M1 3c0-1.500.5-2 2-2h10c1.500 0 2 .5 2 2v10c0 1.500-.5 2-2 2H3c-1.500 0-2-.5-2-2zM1 5.500h14M1 10.500h14M5.500 1v14M10.500 1v14" stroke="#323130" strokeWidth="1.300" /></Svg>
        <T w={155} className="ml-[7px] text-[14.700px] text-[#323130]">restaurant_menu_opti...</T>
      </div>
    </section>
  );
}

function RightRail() {
  const btn = "flex h-[40px] w-full items-center justify-center border border-[#605e5c] bg-[#e1dfdd]";
  const chart = <path d="M12 21H1.500V8.500H7V1.500h7V7h5v2M7 8.500V21M14 7v5" stroke={D} strokeWidth="1.400" />;
  return (
    <aside className="flex w-[40px] shrink-0 flex-col items-center bg-[#faf9f8]">
      <div className={btn}>
        <Svg w={18} h={23}><path d="M1 4v15c0 4 16 4 16 0V4" fill="#fafafa" stroke={D} strokeWidth="1.400" /><ellipse cx="9" cy="4" rx="8" ry="3.200" fill="#fafafa" stroke={D} strokeWidth="1.400" /></Svg>
      </div>
      <div className={btn}>
        <Svg w={23} h={24} className="ml-[2px]"><path d="M1.500 8.500H7V1.500h7V21H1.500z" fill="#fafafa" />{chart}<path d="M12 12v9c0 3 10 3 10 0v-9" fill="#fafafa" stroke="#e07a10" strokeWidth="1.500" /><ellipse cx="17" cy="12" rx="5" ry="2" fill="#fafafa" stroke="#e07a10" strokeWidth="1.500" /></Svg>
      </div>
      <Svg w={23} h={24} className="mt-[9px] ml-[2px]"><path d="M1.500 17V8.500H7V1.500h7V7h5M7 8.500V17M14 7v5" stroke={D} strokeWidth="1.400" /><path d="M22 8l-9 9-2-2z" fill="#faf9f8" stroke={D} strokeWidth="1.200" /><path d="M11 16c-3-1-4 1-4.500 3-.5 1.500-1.500 2.500-3 2.500 4 2 10 2 10-3z" fill="#4aa0e0" stroke={BS} /></Svg>
      <Svg w={22} h={22} className="mt-[16px]"><path d="M11 0v22M0 11h22" stroke="#201f1e" strokeWidth="1.900" /></Svg>
      <div className="mt-auto flex h-[40px] w-full items-center justify-center border-t border-[#dcdad8]">
        <Svg w={26} h={26}>
          <path d="M9.500 1.500h1.500l2 2.500h1l2-2.500h1.500l3 1.800.2 3.500 1 1.500 3.300.7v5l-3.300 1-1 1.500-.2 3.700-3 1.800h-1.500l-2-2.500h-1l-2 2.500H9.500l-3-1.800-.2-3.700-1-1.500-3.800-1V9l3.800-.7 1-1.500.2-3.500z" stroke={D} strokeWidth="1.500" strokeLinejoin="round" transform="translate(0 1)" />
          <circle cx="13.500" cy="13" r="4" stroke={D} strokeWidth="1.600" />
        </Svg>
      </div>
    </aside>
  );
}

function FilterStrip() {
  return (
    <div className="flex h-[746px] w-[41px] shrink-0 flex-col items-center border-l border-[#a8a6a4] bg-white">
      <Svg w={16} h={16} className="mt-[15px] -ml-[1px]"><path d="M8 .8L1 8l7 7.200M15 .8L8 8l7 7.200" stroke="#323130" strokeWidth="1.300" /></Svg>
      <Svg w={16} h={16} className="mt-[20px] ml-[5px]"><path d="M15 1v14L7 10H1V6h6z" stroke="#252423" strokeWidth="1.400" strokeLinejoin="round" /></Svg>
      <div className="mt-[9px] flex h-[55px] [writing-mode:vertical-rl]">
        <span className="text-[18px] leading-[24px] font-semibold tracking-[-0.2px] text-[#201f1e]">Filters</span>
      </div>
    </div>
  );
}

function StatusBar() {
  return (
    <footer className="flex h-[27px] shrink-0 items-center border-t border-[#dcdad8] bg-[#f3f2f1] pt-[4px] pl-[5px] text-[14.500px] text-[#605e5c]">
      <T w={74} className="mt-[2px]">Page 1 of 1</T>
      <Svg w={244} h={22} className="ml-auto -mt-[3px]">
        <path d="M0 11h6M12 11.500h125M144 11h10M149 6v10" stroke="#605e5c" strokeWidth="1.500" />
        <path d="M74 7.500v7" stroke="#605e5c" strokeWidth="1.200" />
        <rect x="59" y="5" width="5" height="13" fill="#605e5c" />
        <text x="170" y="16" fontSize="14" fill="#605e5c" textLength="28">82%</text>
        <rect x="223" y="4.500" width="19" height="14.500" stroke="#605e5c" strokeWidth="1.600" />
        <path d="M226 10V7.500h3M236 7.500h3V10M239 13.500V16h-3M229 16h-3v-2.500" stroke="#605e5c" />
      </Svg>
      <div className="w-[21px]" />
    </footer>
  );
}

export default function App() {
  return (
    <div className="flex h-[1017px] w-[1920px] flex-col overflow-hidden bg-[#f3f2f1] font-['Noto_Sans','Open_Sans',sans-serif]">
      <TitleBar />
      <Ribbon />
      <div className="flex h-[790px] shrink-0">
        <LeftRail />
        <div className="flex w-[1377px] shrink-0 flex-col border-r border-[#dcdad8]">
          <div className="flex">
            <Canvas />
            <FilterStrip />
          </div>
          <PageTabs />
        </div>
        <BuildPane />
        <DataPane />
        <RightRail />
      </div>
      <StatusBar />
    </div>
  );
}
